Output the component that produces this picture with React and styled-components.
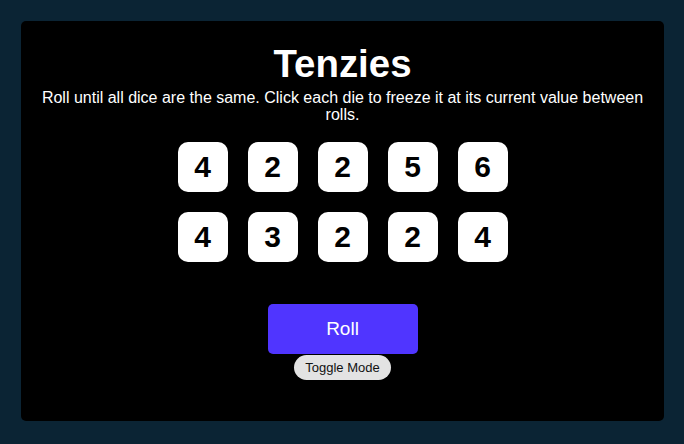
import React, { useState } from "react";
import styled, { createGlobalStyle } from "styled-components";

const Global = createGlobalStyle`
  html, body { margin: 0; padding: 0; background: #0B2434; }
  body { font-family: "Liberation Sans", Arial, sans-serif; }
`;

const Page = styled.div`
  padding: 21px 20px 23px 21px;
  height: 444px;
  box-sizing: border-box;
`;

const Main = styled.main`
  background: #000;
  border-radius: 5px;
  height: 100%;
  display: flex;
  flex-direction: column;
  align-items: center;
  padding: 21px 20px 0;
  box-sizing: border-box;
  color: #fff;
`;

const Title = styled.h1`
  margin: 0;
  font-size: 38.4px;
  font-weight: 700;
  line-height: 44px;
`;

const Instructions = styled.p`
  margin: 3px 0 0;
  font-size: 16px;
  line-height: 17px;
  text-align: center;
`;

const DiceGrid = styled.div`
  display: grid;
  grid-template-columns: repeat(5, 50px);
  gap: 20px;
  margin-top: 19px;
`;

const Die = styled.button`
  width: 50px;
  height: 50px;
  border: none;
  border-radius: 10px;
  background: ${(p) => (p.$held ? "#59E391" : "#fff")};
  color: #000;
  font-family: "Liberation Sans", Arial, sans-serif;
  font-size: 30px;
  font-weight: 700;
  display: flex;
  align-items: center;
  justify-content: center;
  padding: 0;
  cursor: pointer;
`;

const RollButton = styled.button`
  margin-top: 42px;
  width: 150px;
  height: 50px;
  border: none;
  border-radius: 5px;
  background: #5035FF;
  color: #fff;
  font-family: "Liberation Sans", Arial, sans-serif;
  font-size: 19px;
  cursor: pointer;
`;

const ToggleButton = styled.button`
  margin-top: 1px;
  height: 25px;
  padding: 0 11px;
  border: none;
  border-radius: 13px;
  background: #e3e3e3;
  color: #111;
  font-family: "Liberation Sans", Arial, sans-serif;
  font-size: 13px;
  cursor: pointer;
`;

const initial = [4, 2, 2, 5, 6, 4, 3, 2, 2, 4];

export default function App() {
  const [dice] = useState(initial.map((v) => ({ value: v, held: false })));
  return (
    <>
      <Global />
      <Page>
        <Main>
          <Title>Tenzies</Title>
          <Instructions>
            Roll until all dice are the same. Click each die to freeze it at its current value between rolls.
          </Instructions>
          <DiceGrid>
            {dice.map((d, i) => (
              <Die key={i} $held={d.held}>{d.value}</Die>
            ))}
          </DiceGrid>
          <RollButton>Roll</RollButton>
          <ToggleButton>Toggle Mode</ToggleButton>
        </Main>
      </Page>
    </>
  );
}
